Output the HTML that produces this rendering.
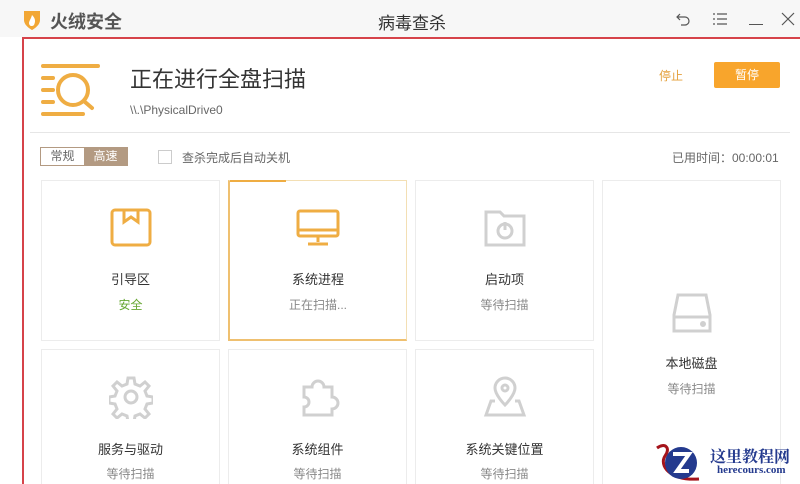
<!DOCTYPE html>
<html><head><meta charset="utf-8"><style>
*{margin:0;padding:0;box-sizing:border-box}
html,body{width:800px;height:484px;overflow:hidden}
body{background:#fff;font-family:"Liberation Sans","Noto Sans CJK SC",sans-serif;position:relative;color:#333}
.top{position:absolute;left:0;top:0;width:800px;height:37px;background:#f7f7f7}
.abs{position:absolute}
.frame{position:absolute;left:22px;top:37px;width:778px;height:447px;border:2px solid #d6434a;border-right:none;border-bottom:none}
.card{position:absolute;width:179px;border:1px solid #ececec;border-bottom:none;background:#fff;text-align:center}
.card .t{position:absolute;left:0;width:100%;font-size:13px;color:#333}
.card .s{position:absolute;left:0;width:100%;font-size:12px;color:#888}
.card svg{position:absolute;left:50%;margin-left:-22px}
</style></head><body>
<div class="top"></div>
<svg class="abs" style="left:22px;top:9px" width="20" height="22" viewBox="0 0 20 22"><path d="M2 2h16v9c0 6-8 10-8 10S2 17 2 11z" fill="#f2a735"/><path d="M10 6c3 3 4 6 2 10-2 2-5 1-5-2 0-2 2-4 3-8z" fill="#fff"/></svg>
<div class="abs" style="left:50px;top:8px;font-size:18px;font-weight:bold;color:#555">火绒安全</div>
<div class="abs" style="left:378px;top:9px;font-size:17px;color:#333">病毒查杀</div>
<svg class="abs" style="left:676px;top:12px" width="16" height="14" viewBox="0 0 16 14" fill="none" stroke="#555" stroke-width="1.2"><path d="M4 2L1 5l3 3M1 5h8a4 4 0 010 8H5"/></svg>
<svg class="abs" style="left:712px;top:13px" width="16" height="12" viewBox="0 0 16 12" stroke="#555" stroke-width="1.2"><path d="M1 1h2M5 1h10M1 6h2M5 6h10M1 11h2M5 11h10"/></svg>
<div class="abs" style="left:749px;top:24px;width:14px;height:1px;background:#555"></div>
<svg class="abs" style="left:781px;top:12px" width="14" height="14" viewBox="0 0 14 14" stroke="#555" stroke-width="1.2"><path d="M1 1l12 12M13 1L1 13"/></svg>
<div class="frame"></div>
<div class="abs" style="left:22px;top:37px;width:778px;height:2px;background:#d6434a"></div>
<svg class="abs" style="left:40px;top:64px" width="62" height="52" viewBox="0 0 62 52" stroke="#efad43" stroke-width="4" stroke-linecap="round" fill="none"><path d="M3 2h55M3 14h10M3 26h10M3 38h10M3 50h40"/><circle cx="33" cy="26" r="15"/><path d="M45 38l7 6"/></svg>
<div class="abs" style="left:130px;top:62px;font-size:22px;color:#333">正在进行全盘扫描</div>
<div class="abs" style="left:130px;top:103px;font-size:12px;color:#666">\\.\PhysicalDrive0</div>
<div class="abs" style="left:659px;top:67px;font-size:12px;color:#e4a03c">停止</div>
<div class="abs" style="left:714px;top:62px;width:66px;height:26px;background:#f8a52c;border-radius:2px;color:#fff;font-size:12px;text-align:center;line-height:26px">暂停</div>
<div class="abs" style="left:30px;top:132px;width:760px;height:1px;background:#e6e6e6"></div>
<div class="abs" style="left:40px;top:147px;width:88px;height:19px;border:1px solid #b39a82;font-size:12px;line-height:17px;color:#666"><span style="display:inline-block;width:43px;text-align:center">常规</span><span style="display:inline-block;width:43px;text-align:center;background:#b39a82;color:#fff">高速</span></div>
<div class="abs" style="left:158px;top:150px;width:14px;height:14px;border:1px solid #ccc"></div>
<div class="abs" style="left:182px;top:149px;font-size:12px;color:#666">查杀完成后自动关机</div>
<div class="abs" style="left:672px;top:149px;font-size:12px;color:#666">已用时间：00:00:01</div>

<div class="card" style="left:41px;top:180px;height:161px;border-bottom:1px solid #ececec"><svg style="top:27px" width="44" height="40" viewBox="0 0 44 40" fill="none" stroke="#efad43" stroke-width="3"><rect x="3" y="2" width="38" height="35" rx="3"/><path d="M15 2v12l7-5 7 5V2"/></svg><div class="t" style="top:88px">引导区</div><div class="s" style="top:115px;color:#68a834">安全</div></div>
<div class="card" style="left:228px;top:180px;height:161px;border:1px solid #f3dfb4;border-left:2px solid #efc070;border-bottom:2px solid #efc070"><div class="abs" style="left:0;top:-1px;width:56px;height:2px;background:#efad43"></div><svg style="top:27px" width="44" height="40" viewBox="0 0 44 40" fill="none" stroke="#efad43" stroke-width="3"><rect x="2" y="3" width="40" height="25" rx="2"/><path d="M2 22h40M22 28v6M12 36h20"/></svg><div class="t" style="top:88px">系统进程</div><div class="s" style="top:115px">正在扫描...</div></div>
<div class="card" style="left:415px;top:180px;height:161px;border-bottom:1px solid #ececec"><svg style="top:27px" width="44" height="40" viewBox="0 0 44 40" fill="none" stroke="#d0d0d0" stroke-width="3"><path d="M3 4h14l4 4h20v29H3z"/><circle cx="22" cy="23" r="7"/><path d="M22 14v8"/></svg><div class="t" style="top:88px">启动项</div><div class="s" style="top:115px">等待扫描</div></div>
<div class="card" style="left:602px;top:180px;height:304px"><svg style="top:110px" width="44" height="44" viewBox="0 0 44 44" fill="none" stroke="#d0d0d0" stroke-width="3"><path d="M8 4h28l4 20v16H4V24z"/><path d="M4 26h36"/><circle cx="33" cy="33" r="1.5"/></svg><div class="t" style="top:172px">本地磁盘</div><div class="s" style="top:199px">等待扫描</div></div>
<div class="card" style="left:41px;top:349px;height:135px"><svg style="top:25px" width="44" height="44" viewBox="0 0 44 44" fill="none" stroke="#d0d0d0" stroke-width="3"><path d="M19 3h6l1 6 5 2 5-4 4 4-4 5 2 5 6 1v6l-6 1-2 5 4 5-4 4-5-4-5 2-1 6h-6l-1-6-5-2-5 4-4-4 4-5-2-5-6-1v-6l6-1 2-5-4-5 4-4 5 4 5-2z"/><circle cx="22" cy="22" r="6"/></svg><div class="t" style="top:89px">服务与驱动</div><div class="s" style="top:115px">等待扫描</div></div>
<div class="card" style="left:228px;top:349px;height:135px"><svg style="top:25px" width="44" height="44" viewBox="0 0 44 44" fill="none" stroke="#d0d0d0" stroke-width="3"><path d="M8 12h8a6 6 0 1112 0h8v10a6 6 0 110 12v6H8v-8a5 5 0 100-10z"/></svg><div class="t" style="top:89px">系统组件</div><div class="s" style="top:115px">等待扫描</div></div>
<div class="card" style="left:415px;top:349px;height:135px"><svg style="top:25px" width="44" height="44" viewBox="0 0 44 44" fill="none" stroke="#d0d0d0" stroke-width="3"><path d="M22 30S12 20 12 13a10 10 0 0120 0c0 7-10 17-10 17z"/><circle cx="22" cy="13" r="3"/><path d="M12 26H8L3 40h38l-5-14h-4"/></svg><div class="t" style="top:89px">系统关键位置</div><div class="s" style="top:115px">等待扫描</div></div>

<svg class="abs" style="left:654px;top:443px" width="50" height="41" viewBox="0 0 50 41"><path d="M3 5c8-6 14 0 8 8C5 22 15 38 45 36" fill="none" stroke="#a5141b" stroke-width="3"/><circle cx="27" cy="20" r="16" fill="#243a8e"/><path d="M19 11h16L23 28h12" fill="none" stroke="#fff" stroke-width="4"/></svg>
<div class="abs" style="left:710px;top:444px;font-size:16px;font-weight:bold;color:#243a8e;font-family:'Liberation Serif','Noto Serif CJK SC',serif">这里教程网</div>
<div class="abs" style="left:717px;top:464px;font-size:11px;font-weight:bold;color:#243a8e;font-family:'Liberation Serif',serif">herecours.com</div>
</body></html>
